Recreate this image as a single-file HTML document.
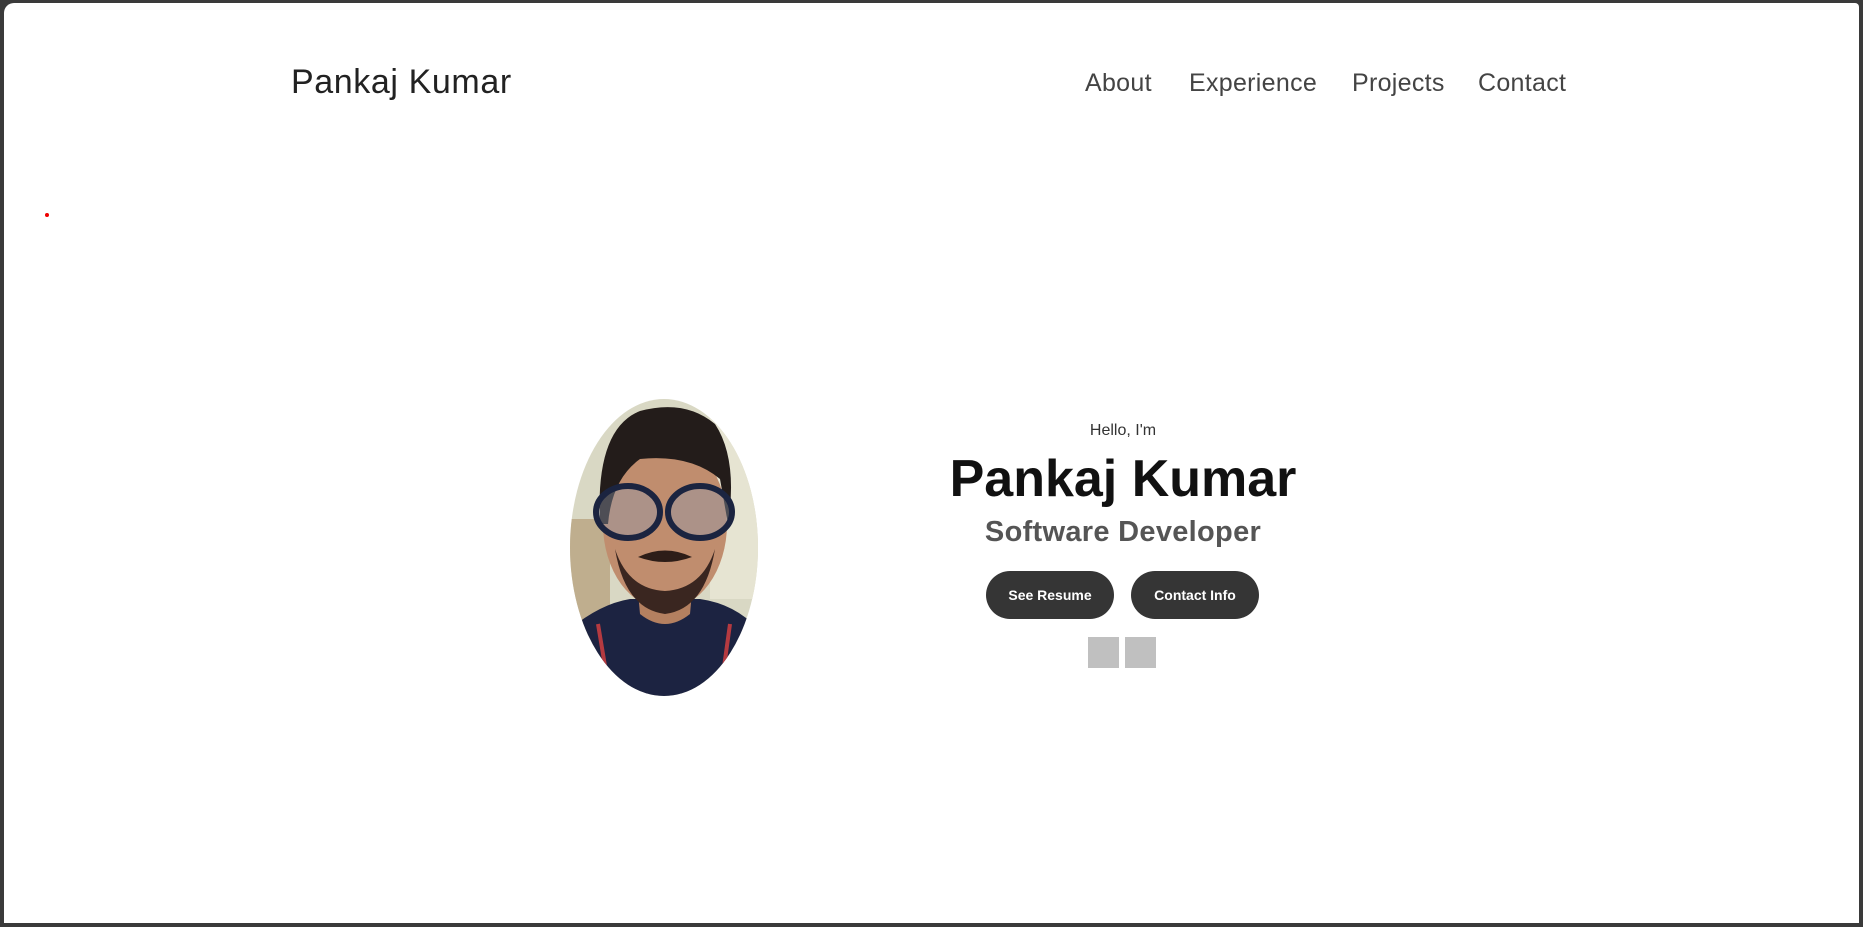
<!DOCTYPE html>
<html><head><meta charset="utf-8"><style>
html,body{margin:0;padding:0;width:1863px;height:927px;overflow:hidden;background:#3a3a3a;font-family:"Liberation Sans",Arial,sans-serif}
.page{position:absolute;left:4px;top:3px;width:1855px;height:920px;background:#fff;border-radius:10px 4px 0 0}
.abs{position:absolute;white-space:nowrap}
.logo{left:287px;top:60px;font-size:34px;color:#222;letter-spacing:.6px}
.nav{top:66px;font-size:25px;color:#444;letter-spacing:.3px}
.hello{left:1119px;top:419px;font-size:16px;color:#333;transform:translateX(-50%)}
.name{left:1119px;top:446px;font-size:52px;color:#111;font-weight:bold;transform:translateX(-50%)}
.role{left:1119px;top:513px;font-size:29px;color:#555;font-weight:bold;transform:translateX(-50%);letter-spacing:.3px}
.btn{top:568px;width:128px;height:48px;border-radius:24px;background:#353535;color:#fff;font-size:14px;font-weight:bold;text-align:center;line-height:48px}
.sq{top:634px;width:31px;height:31px;background:#c0c0c0}
</style></head><body>
<div class="page">
<div class="abs logo">Pankaj Kumar</div>
<div class="abs nav" style="left:1081px">About</div>
<div class="abs nav" style="left:1185px">Experience</div>
<div class="abs nav" style="left:1348px">Projects</div>
<div class="abs nav" style="left:1474px">Contact</div>
<div class="abs" style="left:41px;top:210px;width:4px;height:4px;border-radius:50%;background:#e00"></div>
<svg class="abs" style="left:566px;top:396px" width="188" height="297" viewBox="0 0 188 297">
<defs><clipPath id="c"><ellipse cx="94" cy="148.5" rx="94" ry="148.5"/></clipPath></defs>
<g clip-path="url(#c)">
<rect width="188" height="297" fill="#d9d8c4"/>
<rect x="140" y="0" width="48" height="200" fill="#e6e4d2"/>
<rect x="0" y="120" width="40" height="120" fill="#bfae8e"/>
<path d="M0 297 L0 230 Q30 205 60 200 L130 200 Q165 205 188 230 L188 297Z" fill="#1c2341"/>
<path d="M28 225 L40 297 M160 225 L150 297" stroke="#b53a40" stroke-width="4"/>
<path d="M65 160 L70 215 Q95 235 120 215 L125 160Z" fill="#b48060"/>
<ellipse cx="95" cy="125" rx="62" ry="85" fill="#c08d6e"/>
<path d="M30 125 Q25 30 70 12 Q115 0 145 25 Q168 60 158 125 L150 80 Q120 55 70 60 Q42 80 38 125Z" fill="#231c1a"/>
<path d="M45 150 Q55 210 95 215 Q135 210 145 150 Q132 190 95 192 Q58 190 45 150Z" fill="#3a2620"/>
<path d="M68 158 Q95 145 122 158 Q95 168 68 158Z" fill="#2d1d18"/>
<ellipse cx="58" cy="113" rx="32" ry="26" fill="#8e9bb0" fill-opacity=".4" stroke="#1b2440" stroke-width="6"/>
<ellipse cx="130" cy="113" rx="32" ry="26" fill="#8e9bb0" fill-opacity=".4" stroke="#1b2440" stroke-width="6"/>
</g></svg>
<div class="abs hello">Hello, I'm</div>
<div class="abs name">Pankaj Kumar</div>
<div class="abs role">Software Developer</div>
<div class="abs btn" style="left:982px">See Resume</div>
<div class="abs btn" style="left:1127px">Contact Info</div>
<div class="abs sq" style="left:1084px"></div>
<div class="abs sq" style="left:1121px"></div>
</div>
</body></html>
